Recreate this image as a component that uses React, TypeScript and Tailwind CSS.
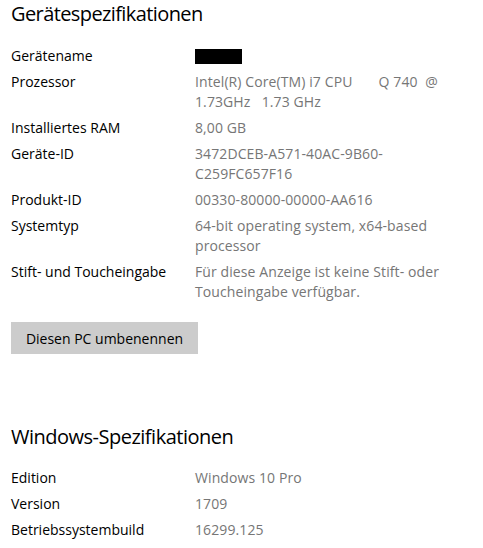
const device = [
  { label: "Gerätename", value: null },
  { label: "Prozessor", value: ["Intel(R) Core(TM) i7 CPU       Q 740  @", "1.73GHz   1.73 GHz"] },
  { label: "Installiertes RAM", value: ["8,00 GB"] },
  { label: "Geräte-ID", value: ["3472DCEB-A571-40AC-9B60-", "C259FC657F16"] },
  { label: "Produkt-ID", value: ["00330-80000-00000-AA616"] },
  { label: "Systemtyp", value: ["64-bit operating system, x64-based", "processor"] },
  { label: "Stift- und Toucheingabe", value: ["Für diese Anzeige ist keine Stift- oder", "Toucheingabe verfügbar."] },
];

const windows = [
  { label: "Edition", value: ["Windows 10 Pro"] },
  { label: "Version", value: ["1709"] },
  { label: "Betriebssystembuild", value: ["16299.125"] },
];

function SpecRow({ label, value }: { label: string; value: string[] | null }) {
  return (
    <div className="flex text-[14px] leading-[20px]">
      <div className="w-[184px] shrink-0 text-black">{label}</div>
      <div className="text-[#767676] whitespace-pre tracking-[0.1px]">
        {value ? (
          value.map((line, i) => <div key={i}>{line}</div>)
        ) : (
          <div className="h-[20px] flex items-center">
            <div className="w-[47px] h-[15px] bg-black" />
          </div>
        )}
      </div>
    </div>
  );
}

export default function App() {
  return (
    <div
      className="w-[483px] h-[548px] bg-white overflow-hidden pl-[11px]"
      style={{ fontFamily: '"Open Sans", "Noto Sans", sans-serif' }}
    >
      <h2 className="text-[20px] leading-[28px] tracking-[-0.6px] text-black">
        Gerätespezifikationen
      </h2>

      <div className="mt-[18px] flex flex-col gap-[6px]">
        {device.map((r) => (
          <SpecRow key={r.label} label={r.label} value={r.value} />
        ))}
      </div>

      <button className="mt-[20px] w-[187px] h-[32px] bg-[#cccccc] text-[14px] text-black">
        Diesen PC umbenennen
      </button>

      <h2 className="mt-[69px] text-[20px] leading-[28px] tracking-[-0.5px] text-black">
        Windows-Spezifikationen
      </h2>

      <div className="mt-[17px] flex flex-col gap-[6px]">
        {windows.map((r) => (
          <SpecRow key={r.label} label={r.label} value={r.value} />
        ))}
      </div>
    </div>
  );
}
